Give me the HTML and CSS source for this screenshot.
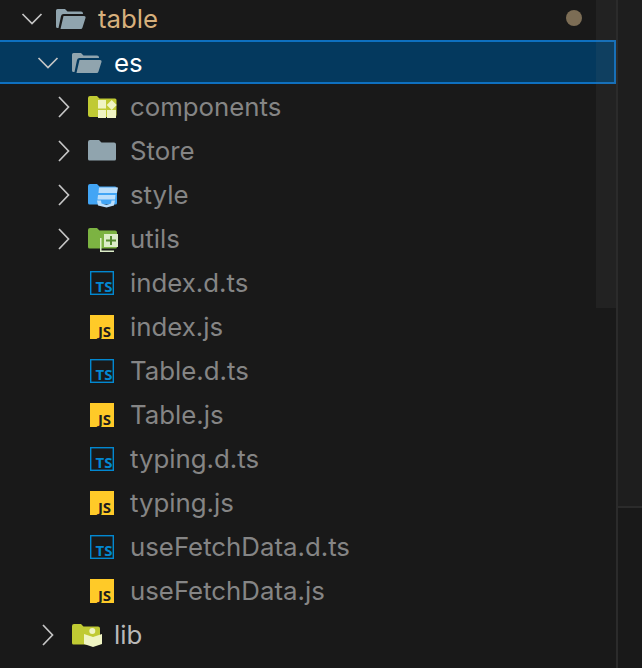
FILE: index.html
```html
<!DOCTYPE html>
<html lang="en">
<head>
<meta charset="utf-8">
<title>Explorer</title>
<link rel="stylesheet" href="styles.css">
</head>
<body>
<div class="app">
  <aside class="sidebar">
    <div class="tree">
      <div class="row depth-1 modified">
        <svg class="chev-down" viewBox="0 0 22 14"><path d="M1.500 2l9.500 9.500L20.500 2"/></svg>
        <svg class="icon" viewBox="0 0 30 24"><path fill="#90a4ae" d="M0 3.500A1.500 1.500 0 0 1 1.500 2H9l2.500 2.500H25A2 2 0 0 1 27 6.500V7H7.500Q5.500 7 5 9L2.500 21H1.500A1.500 1.500 0 0 1 0 19.500z"/><path fill="#90a4ae" d="M7.500 9H28a1.500 1.500 0 0 1 1.500 2L26.500 20.500A2 2 0 0 1 24.500 22H4.500z"/></svg>
        <span class="name">table</span>
        <span class="dot"></span>
      </div>
      <div class="row depth-2 selected">
        <svg class="chev-down" viewBox="0 0 22 14"><path d="M1.500 2l9.500 9.500L20.500 2"/></svg>
        <svg class="icon" viewBox="0 0 30 24"><path fill="#90a4ae" d="M0 3.500A1.500 1.500 0 0 1 1.500 2H9l2.500 2.500H25A2 2 0 0 1 27 6.500V7H7.500Q5.500 7 5 9L2.500 21H1.500A1.500 1.500 0 0 1 0 19.500z"/><path fill="#90a4ae" d="M7.500 9H28a1.500 1.500 0 0 1 1.500 2L26.500 20.500A2 2 0 0 1 24.500 22H4.500z"/></svg>
        <span class="name">es</span>
      </div>
      <div class="row depth-3">
        <svg class="chev" viewBox="0 0 14 22"><path d="M2 1l9.500 10L2 21"/></svg>
        <svg class="icon" viewBox="0 0 30 24"><path fill="#c0ca33" d="M0 3a2 2 0 0 1 2-2h7l2.500 2.500H27a1.500 1.500 0 0 1 1.500 1.500v15a2 2 0 0 1-2 2H2a2 2 0 0 1-2-2z"/><path fill="#f0f4c3" d="M10 5h8v8.500h-8zM10 15h8v8h-8zM19 15h9v8h-9zM23.700 5l5 5-5 5-5-5z"/></svg>
        <span class="name">components</span>
      </div>
      <div class="row depth-3">
        <svg class="chev" viewBox="0 0 14 22"><path d="M2 1l9.500 10L2 21"/></svg>
        <svg class="icon" viewBox="0 0 30 24"><path fill="#90a4ae" d="M0 3a2 2 0 0 1 2-2h9l2.500 2.500H26a2 2 0 0 1 2 2V20a1.500 1.500 0 0 1-1.500 1.500H1.500A1.500 1.500 0 0 1 0 20z"/></svg>
        <span class="name">Store</span>
      </div>
      <div class="row depth-3">
        <svg class="chev" viewBox="0 0 14 22"><path d="M2 1l9.500 10L2 21"/></svg>
        <svg class="icon" viewBox="0 0 30 24"><path fill="#42a5f5" d="M0 3a2 2 0 0 1 2-2h7l2.500 2.500H27a2 2 0 0 1 2 2V20a1.500 1.500 0 0 1-1.500 1.500H1.500A1.500 1.500 0 0 1 0 20z"/><path fill="#bbdefb" d="M11 4.500H30L29 10H10.500zM10 12H27.500L27 16.500H9.500zM9 17.500H13L13.500 20.500L18.500 22L23 20.500L23.500 17.500H27L26 22.500L18.500 24.500L10 22.500z"/></svg>
        <span class="name">style</span>
      </div>
      <div class="row depth-3">
        <svg class="chev" viewBox="0 0 14 22"><path d="M2 1l9.500 10L2 21"/></svg>
        <svg class="icon" viewBox="0 0 30 24"><path fill="#7cb342" d="M0 3a2 2 0 0 1 2-2h7l2.500 2.500H27a2 2 0 0 1 2 2V20a1.500 1.500 0 0 1-1.500 1.500H1.500A1.500 1.500 0 0 1 0 20z"/><path fill="#dcedc8" d="M16 7h14v13H16z"/><path fill="#dcedc8" d="M12 11h1.500v12.500H26V25H12z"/><path fill="#558b2f" d="M22 9h2v3.500h4v2h-4V18h-2v-3.500h-4v-2h4z"/></svg>
        <span class="name">utils</span>
      </div>
      <div class="row depth-3 file">
        <svg class="icon-file" viewBox="0 0 24 24"><rect x="0.700" y="0.700" width="22.600" height="22.600" fill="none" stroke="#0288d1" stroke-width="1.400"/><text class="ts-mark" x="14" y="21" text-anchor="middle">TS</text></svg>
        <span class="name">index.d.ts</span>
      </div>
      <div class="row depth-3 file">
        <svg class="icon-file" viewBox="0 0 24 24"><rect width="24" height="24" fill="#ffca28"/><text class="js-mark" x="14.500" y="22" text-anchor="middle">JS</text></svg>
        <span class="name">index.js</span>
      </div>
      <div class="row depth-3 file">
        <svg class="icon-file" viewBox="0 0 24 24"><rect x="0.700" y="0.700" width="22.600" height="22.600" fill="none" stroke="#0288d1" stroke-width="1.400"/><text class="ts-mark" x="14" y="21" text-anchor="middle">TS</text></svg>
        <span class="name">Table.d.ts</span>
      </div>
      <div class="row depth-3 file">
        <svg class="icon-file" viewBox="0 0 24 24"><rect width="24" height="24" fill="#ffca28"/><text class="js-mark" x="14.500" y="22" text-anchor="middle">JS</text></svg>
        <span class="name">Table.js</span>
      </div>
      <div class="row depth-3 file">
        <svg class="icon-file" viewBox="0 0 24 24"><rect x="0.700" y="0.700" width="22.600" height="22.600" fill="none" stroke="#0288d1" stroke-width="1.400"/><text class="ts-mark" x="14" y="21" text-anchor="middle">TS</text></svg>
        <span class="name">typing.d.ts</span>
      </div>
      <div class="row depth-3 file">
        <svg class="icon-file" viewBox="0 0 24 24"><rect width="24" height="24" fill="#ffca28"/><text class="js-mark" x="14.500" y="22" text-anchor="middle">JS</text></svg>
        <span class="name">typing.js</span>
      </div>
      <div class="row depth-3 file">
        <svg class="icon-file" viewBox="0 0 24 24"><rect x="0.700" y="0.700" width="22.600" height="22.600" fill="none" stroke="#0288d1" stroke-width="1.400"/><text class="ts-mark" x="14" y="21" text-anchor="middle">TS</text></svg>
        <span class="name">useFetchData.d.ts</span>
      </div>
      <div class="row depth-3 file">
        <svg class="icon-file" viewBox="0 0 24 24"><rect width="24" height="24" fill="#ffca28"/><text class="js-mark" x="14.500" y="22" text-anchor="middle">JS</text></svg>
        <span class="name">useFetchData.js</span>
      </div>
      <div class="row depth-lib bright">
        <svg class="chev" viewBox="0 0 14 22"><path d="M2 1l9.500 10L2 21"/></svg>
        <svg class="icon" viewBox="0 0 30 24"><path fill="#c0ca33" d="M0 3a2 2 0 0 1 2-2h7l2.500 2.500H26a2 2 0 0 1 2 2V20a1.500 1.500 0 0 1-1.500 1.500H1.500A1.500 1.500 0 0 1 0 20z"/><circle cx="20.300" cy="8" r="3" fill="#f0f4c3"/><path fill="#f0f4c3" d="M12 11l9 3 9-3v10l-9 3-9-3z"/></svg>
        <span class="name">lib</span>
      </div>
    </div>
    <div class="thumb"></div>
  </aside>
  <div class="pane">
    <div class="pane-top"></div>
    <div class="pane-bottom"></div>
  </div>
</div>
</body>
</html>
```
FILE: styles.css
```css
html, body {
  margin: 0;
  height: 100%;
  background: #191919;
  overflow: hidden;
}
.app {
  display: flex;
  height: 668px;
  width: 642px;
}
.sidebar {
  position: relative;
  flex: none;
  width: 616px;
  overflow: hidden;
  font-family: Inter, "Liberation Sans", sans-serif;
}
.tree {
  margin-top: -4px;
}
.row {
  display: flex;
  align-items: center;
  box-sizing: border-box;
  height: 44px;
  padding-top: 2px;
  color: #858585;
  font-size: 25.800px;
}
.depth-1 { padding-left: 21px; }
.depth-2 { padding-left: 37px; }
.depth-3 { padding-left: 57px; }
.depth-lib { padding-left: 41px; }
.file { padding-left: 90px; }
.chev-down {
  flex: none;
  width: 22px;
  height: 14px;
  fill: none;
  stroke: #c5c5c5;
  stroke-width: 1.700;
}
.chev {
  flex: none;
  width: 14px;
  height: 22px;
  fill: none;
  stroke: #c5c5c5;
  stroke-width: 1.700;
}
.icon {
  flex: none;
  width: 30px;
  height: 24px;
  margin-left: 17px;
  overflow: visible;
}
.chev-down + .icon {
  margin-left: 13px;
}
.icon-file {
  flex: none;
  width: 24px;
  height: 24px;
  overflow: visible;
}
.name {
  margin-top: -2px;
  margin-left: 12px;
  white-space: nowrap;
}
.file .name {
  margin-left: 16px;
}
.modified {
  color: #d7b07c;
}
.selected {
  padding-top: 0;
  background: #04395e;
  border: 2px solid #0e70c0;
  border-left: 0;
  color: #fff;
}
.selected .chev-down,
.selected .icon,
.selected .name {
  position: relative;
  top: 1px;
}
.bright {
  color: #b8b8b8;
}
.dot {
  width: 16px;
  height: 16px;
  margin-top: -2px;
  margin-left: auto;
  margin-right: 34px;
  border-radius: 50%;
  background: #7c6d55;
}
.ts-mark {
  font: 700 15px "Open Sans", sans-serif;
  fill: #0288d1;
}
.js-mark {
  font: 700 15px "Open Sans", sans-serif;
  fill: #1d1d1d;
}
.thumb {
  position: absolute;
  top: 0;
  right: 0;
  width: 20px;
  height: 308px;
  background: rgba(121, 121, 121, 0.1);
}
.pane {
  display: flex;
  flex-direction: column;
  flex: none;
  width: 26px;
  box-sizing: border-box;
  border-left: 2px solid #2b2b2b;
}
.pane-top {
  height: 506px;
  background: #1e1e1e;
  border-bottom: 2px solid #2b2b2b;
}
.pane-bottom {
  flex: 1;
  background: #191919;
}
```
